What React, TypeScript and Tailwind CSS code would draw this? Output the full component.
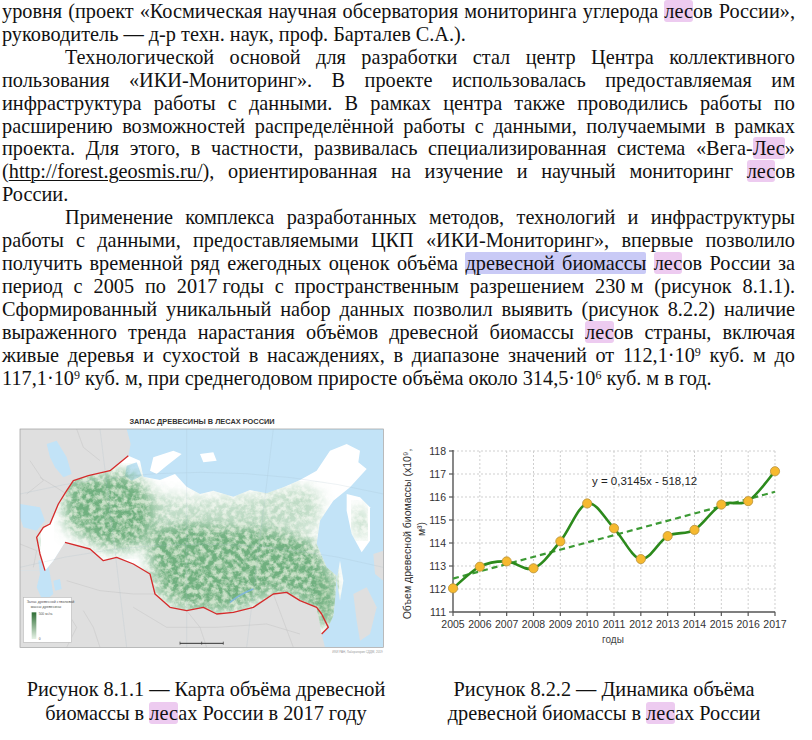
import type { ReactNode } from "react";

// Body text lines are split as in the source page so the line breaks match.
function Line({ children, indent, last }: { children: ReactNode; indent?: boolean; last?: boolean }) {
  return (
    <div
      className={`${indent ? "pl-[63px]" : ""} ${last ? "text-left" : "text-justify [text-align-last:justify]"}`}
    >
      {children}
    </div>
  );
}

function Pink({ children }: { children: ReactNode }) {
  return <span className="rounded-[3px] bg-[#edcbf0]">{children}</span>;
}

function Blue({ children }: { children: ReactNode }) {
  return <span className="rounded-[2px] bg-[#c9caf6]">{children}</span>;
}

function Sup({ children }: { children: ReactNode }) {
  return <sup className="text-[12px]">{children}</sup>;
}

const years = [2005, 2006, 2007, 2008, 2009, 2010, 2011, 2012, 2013, 2014, 2015, 2016, 2017];
const vals = [112.03, 112.97, 113.2, 112.9, 114.07, 115.72, 114.64, 113.3, 114.3, 114.57, 115.67, 115.82, 117.12];

const X0 = 53;
const STEP = 26.833;
const Y111 = 213;
const UNIT = 23;
const px = (i: number) => X0 + i * STEP;
const py = (v: number) => Y111 - (v - 111) * UNIT;

function smoothPath(pts: [number, number][]) {
  let d = `M${pts[0][0]},${pts[0][1]}`;
  for (let i = 0; i < pts.length - 1; i++) {
    const p0 = pts[i - 1] ?? pts[i];
    const p1 = pts[i];
    const p2 = pts[i + 1];
    const p3 = pts[i + 2] ?? p2;
    const c1x = p1[0] + (p2[0] - p0[0]) / 6;
    const c1y = p1[1] + (p2[1] - p0[1]) / 6;
    const c2x = p2[0] - (p3[0] - p1[0]) / 6;
    const c2y = p2[1] - (p3[1] - p1[1]) / 6;
    d += ` C${c1x.toFixed(1)},${c1y.toFixed(1)} ${c2x.toFixed(1)},${c2y.toFixed(1)} ${p2[0].toFixed(1)},${p2[1].toFixed(1)}`;
  }
  return d;
}

function BiomassChart() {
  const pts = vals.map((v, i) => [px(i), py(v)] as [number, number]);
  const trend = (y: number) => 0.3145 * y - 518.12;
  const sans = "Liberation Sans, Arial, sans-serif";
  return (
    <svg width="412" height="262" viewBox="0 0 412 262" className="block">
      {/* grid */}
      {[112, 113, 114, 115, 116, 117, 118].map((v) => (
        <line key={v} x1={X0} x2={px(12)} y1={py(v)} y2={py(v)} stroke="#cfcfcf" strokeWidth="1" strokeDasharray="2 2" />
      ))}
      {years.slice(1).map((y, i) => (
        <line key={y} x1={px(i + 1)} x2={px(i + 1)} y1={py(118)} y2={Y111} stroke="#cfcfcf" strokeWidth="1" strokeDasharray="2 2" />
      ))}
      {/* axes */}
      <line x1={X0} x2={X0} y1={py(118) - 1} y2={Y111} stroke="#555" strokeWidth="1.4" />
      <line x1={X0} x2={px(12)} y1={Y111} y2={Y111} stroke="#555" strokeWidth="1.4" />
      {[111, 112, 113, 114, 115, 116, 117, 118].map((v) => (
        <g key={v}>
          <line x1={X0 - 4} x2={X0} y1={py(v)} y2={py(v)} stroke="#555" strokeWidth="1.2" />
          <text x={X0 - 7} y={py(v) + 4} textAnchor="end" fontFamily={sans} fontSize="10.5" fill="#333">
            {v}
          </text>
        </g>
      ))}
      {years.map((y, i) => (
        <g key={y}>
          <line x1={px(i)} x2={px(i)} y1={Y111} y2={Y111 + 4} stroke="#555" strokeWidth="1.2" />
          <text x={px(i)} y={229} textAnchor="middle" fontFamily={sans} fontSize="10.5" fill="#333">
            {y}
          </text>
        </g>
      ))}
      <text x={213} y={244} textAnchor="middle" fontFamily={sans} fontSize="10" fill="#444">
        годы
      </text>
      <text transform="translate(11,135) rotate(-90)" textAnchor="middle" fontFamily={sans} fontSize="10.5" fill="#333">
        Объем древесной биомассы (x10⁹,
      </text>
      <text transform="translate(25,130) rotate(-90)" textAnchor="middle" fontFamily={sans} fontSize="10.5" fill="#333">
        м³)
      </text>
      {/* trend */}
      <line
        x1={px(0)}
        y1={py(trend(2005))}
        x2={px(12)}
        y2={py(trend(2017))}
        stroke="#3c9a34"
        strokeWidth="2.2"
        strokeDasharray="6 4"
      />
      <path d={smoothPath(pts)} fill="none" stroke="#2c8a1c" strokeWidth="2.6" />
      {pts.map(([x, y], i) => (
        <circle key={i} cx={x} cy={y} r="4.6" fill="#f6b92f" stroke="#b8923c" strokeWidth="0.8" />
      ))}
      <text x={192} y={86} fontFamily={sans} fontSize="11.5" fill="#222">
        y = 0,3145x - 518,12
      </text>
    </svg>
  );
}

const russia =
  "385,185 420,200 430,248 480,258 525,240 560,278 600,300 640,290 700,308 750,288 800,298 850,280 900,258 950,230 990,170 1040,150 1080,170 1075,205 1100,225 1050,280 1000,320 960,380 950,450 980,520 1010,545 1005,620 1000,665 985,700 965,720 950,640 900,620 860,595 820,600 760,640 700,655 650,660 610,640 560,650 510,640 465,600 450,540 400,510 350,490 310,500 270,465 195,445 160,500 135,530 120,480 110,430 130,400 150,390 175,330 200,290 220,260 265,245 330,230 385,185";

const kamchatka = "1040,300 1080,310 1110,340 1110,440 1085,475 1055,420 1040,350";
const sakhalin = "1020,500 1030,560 1020,620 1010,560";

const europe =
  "60,105 380,105 392,150 385,185 330,230 265,245 220,260 200,290 175,330 150,390 130,400 110,430 120,480 135,530 60,530";
const asia =
  "60,530 135,530 160,500 195,445 270,465 310,500 350,490 400,510 450,540 465,600 510,640 560,650 610,640 650,660 700,655 760,640 820,600 860,595 900,620 950,640 965,660 985,700 965,720 975,760 60,760";

function ForestMap() {
  const sans = "Liberation Sans, Arial, sans-serif";
  return (
    <svg width="400" height="262" viewBox="0 0 400 262" className="block">
      <defs>
        <clipPath id="frame">
          <rect x="60" y="105" width="1090" height="655" />
        </clipPath>
        <clipPath id="ru">
          <polygon points={russia} />
          <polygon points={kamchatka} />
          <polygon points={sakhalin} />
        </clipPath>
        <filter id="forest" x="-0.1" y="-0.1" width="1.2" height="1.2">
          <feTurbulence type="fractalNoise" baseFrequency="0.06" numOctaves="4" seed="7" result="n" />
          <feColorMatrix
            in="n"
            type="matrix"
            values="0 0 0 0 0.16  0 0 0 0 0.43  0 0 0 0 0.21  3.0 0 0 0 -0.9"
            result="g"
          />
          <feFlood floodColor="#86b981" floodOpacity="0.45" result="f" />
          <feMerge result="mix">
            <feMergeNode in="f" />
            <feMergeNode in="g" />
          </feMerge>
          <feGaussianBlur in="SourceGraphic" stdDeviation="22" result="m" />
          <feComposite in="mix" in2="m" operator="in" />
        </filter>
        <linearGradient id="leg" x1="0" y1="0" x2="0" y2="1">
          <stop offset="0" stopColor="#2f6e35" />
          <stop offset="1" stopColor="#e6f2e6" />
        </linearGradient>
      </defs>
      <text x="202" y="24.5" textAnchor="middle" fontFamily={sans} fontWeight="bold" fontSize="7.4" fill="#333">
        ЗАПАС ДРЕВЕСИНЫ В ЛЕСАХ РОССИИ
      </text>
      <g transform="translate(0,-5) scale(0.33333)">
        <g clipPath="url(#frame)">
          {/* ocean everywhere, land on top */}
          <rect x="60" y="105" width="1090" height="655" fill="#c2e3f7" />
          <polygon points={europe} fill="#dfdfdf" />
          <polygon points={asia} fill="#dfdfdf" />
          <polygon points="1060,600 1100,580 1130,640 1110,720 1080,740 1070,680" fill="#dfdfdf" />
          <polygon points="1120,480 1150,470 1150,560 1125,540" fill="#dfdfdf" />
          {/* inland seas */}
          <g fill="#c2e3f7">
            <polygon points="140,150 170,140 200,190 215,240 190,250 165,220 150,190" />
            <polygon points="60,330 120,340 135,380 110,410 70,400 60,370" />
            <polygon points="115,500 140,490 150,540 160,600 130,625 110,580 120,540" />
            <polygon points="160,560 180,555 185,585 165,590" />
          </g>
          {/* country borders on the grey land */}
          <g fill="none" stroke="#c6c6c6" strokeWidth="1.6">
            <polyline points="200,560 300,590 400,600 470,600" />
            <polyline points="400,640 500,700 650,700 800,690 900,720" />
            <polyline points="250,650 280,700 300,760" />
            <polyline points="120,250 200,300 190,360 150,400" />
            <polyline points="60,450 110,470 100,520" />
            <polyline points="560,650 600,700 620,760" />
            <polyline points="820,600 850,680 880,760" />
            <polyline points="180,620 230,700 200,760" />
            <polyline points="90,200 130,260 80,300" />
            <polyline points="230,105 250,160 300,200" />
          </g>
          {/* Russia */}
          <polygon points={russia} fill="#ffffff" />
          <polygon points={kamchatka} fill="#ffffff" />
          <polygon points={sakhalin} fill="#ffffff" />
          <polygon points="460,190 520,170 545,180 500,215 470,240 450,230" fill="#ffffff" />
          <polygon points="600,180 640,175 650,200 610,205" fill="#ffffff" />
          <polygon points="380,215 410,205 425,245 395,260 375,245" fill="#c2e3f7" />
          {/* forest cover */}
          <g clipPath="url(#ru)">
            <polygon
              points="200,250 300,240 380,232 440,280 470,360 440,450 360,470 300,460 250,430 200,400 190,320"
              fill="#000"
              filter="url(#forest)"
            />
            <polygon
              points="440,400 560,380 700,390 820,400 930,430 990,520 1000,650 960,700 900,620 820,600 700,655 560,650 470,600 450,520"
              fill="#000"
              filter="url(#forest)"
            />
            <polygon
              points="450,300 600,315 750,305 900,275 960,300 960,400 850,405 700,385 550,375 460,385"
              fill="#000"
              opacity="0.45"
              filter="url(#forest)"
            />
            <polygon points="1060,330 1100,360 1100,430 1070,430" fill="#000" opacity="0.6" filter="url(#forest)" />
            <polygon points="955,540 1010,550 1005,690 970,705" fill="#000" filter="url(#forest)" />
            <polygon points="100,400 120,400 120,460 100,460" fill="#000" filter="url(#forest)" />
          </g>
          {/* graticule */}
          <g fill="none" stroke="#9fb7c6" strokeWidth="1.1" opacity="0.5">
            <path d="M300,105 Q340,430 380,760" />
            <path d="M560,105 Q560,430 560,760" />
            <path d="M820,105 Q780,430 740,760" />
            <path d="M60,300 Q600,170 1150,300" />
            <path d="M60,520 Q600,380 1150,520" />
          </g>
          {/* Lake Baikal */}
          <path d="M690,625 Q720,600 760,585" stroke="#7fb6d8" strokeWidth="5" fill="none" />
          {/* state border */}
          <g fill="none" stroke="#d52b2b" strokeWidth="4" strokeLinejoin="round">
            <polyline points="385,185 330,230 265,245 220,260 200,290 175,330 150,390 130,400 110,430 120,480 135,530" />
            <polyline points="195,445 270,465 310,500 350,490 400,510 450,540 465,600 510,640 560,650 610,640 650,660 700,655 760,640 820,600 860,595 900,620 950,640 965,660 985,700 965,720" />
          </g>
          {/* legend */}
          <rect x="70" y="610" width="145" height="135" fill="#fff" stroke="#bbb" strokeWidth="2" />
          <text x="80" y="628" fontFamily={sans} fontSize="11" fill="#555">
            Запас древесной стволовой
          </text>
          <text x="92" y="642" fontFamily={sans} fontSize="11" fill="#555">
            массы древесины
          </text>
          <rect x="95" y="655" width="14" height="80" fill="url(#leg)" />
          <text x="116" y="664" fontFamily={sans} fontSize="10" fill="#555">
            500 м³/га
          </text>
          <text x="116" y="737" fontFamily={sans} fontSize="10" fill="#555">
            0
          </text>
          {/* scale bar */}
          <line x1="540" y1="748" x2="670" y2="748" stroke="#333" strokeWidth="3" />
          <line x1="540" y1="743" x2="540" y2="752" stroke="#333" strokeWidth="2" />
          <line x1="605" y1="743" x2="605" y2="752" stroke="#333" strokeWidth="2" />
          <line x1="670" y1="743" x2="670" y2="752" stroke="#333" strokeWidth="2" />
        </g>
        <rect x="60" y="105" width="1090" height="655" fill="none" stroke="#999" strokeWidth="2" />
        <text x="1148" y="776" textAnchor="end" fontFamily={sans} fontSize="9" fill="#999">
          ИКИ РАН, Лаборатория СДДМ, 2019
        </text>
      </g>
    </svg>
  );
}

export default function App() {
  return (
    <div className="w-[812px] bg-white font-['Liberation_Serif','Times_New_Roman',serif] text-[20.3px] leading-[22.9px] text-[#111]">
      <div className="w-[795px] pl-[2px]">
        <Line>
          уровня (проект «Космическая научная обсерватория мониторинга углерода <Pink>лес</Pink>ов России»,
        </Line>
        <Line last>руководитель — д-р техн. наук, проф. Барталев С.А.).</Line>
        <Line indent>Технологической основой для разработки стал центр Центра коллективного</Line>
        <Line>пользования «ИКИ-Мониторинг». В проекте использовалась предоставляемая им</Line>
        <Line>инфраструктура работы с данными. В рамках центра также проводились работы по</Line>
        <Line>расширению возможностей распределённой работы с данными, получаемыми в рамках</Line>
        <Line>
          проекта. Для этого, в частности, развивалась специализированная система «Вега-<Pink>Лес</Pink>»
        </Line>
        <Line>
          (<span className="underline decoration-1 underline-offset-2">http://forest.geosmis.ru/</span>), ориентированная на
          изучение и научный мониторинг <Pink>лес</Pink>ов
        </Line>
        <Line last>России.</Line>
        <Line indent>Применение комплекса разработанных методов, технологий и инфраструктуры</Line>
        <Line>работы с данными, предоставляемыми ЦКП «ИКИ-Мониторинг», впервые позволило</Line>
        <Line>
          получить временной ряд ежегодных оценок объёма <Blue>древесной биомассы</Blue> <Pink>лес</Pink>ов России за
        </Line>
        <Line>
          период с 2005 по <span className="inline-block">2017&nbsp;годы</span> с пространственным разрешением{" "}
          <span className="inline-block">230&nbsp;м</span> (рисунок&nbsp;8.1.1).
        </Line>
        <Line>Сформированный уникальный набор данных позволил выявить (рисунок 8.2.2) наличие</Line>
        <Line>
          выраженного тренда нарастания объёмов древесной биомассы <Pink>лес</Pink>ов страны, включая
        </Line>
        <Line>
          живые деревья и сухостой в насаждениях, в диапазоне значений от 112,1·10<Sup>9</Sup> куб. м до
        </Line>
        <Line last>
          117,1·10<Sup>9</Sup> куб. м, при среднегодовом приросте объёма около 314,5·10<Sup>6</Sup> куб. м в год.
        </Line>
      </div>

      <div className="mt-[10px] grid grid-cols-[400px_412px]">
        <figure>
          <ForestMap />
          <figcaption className="mt-4 pl-[12px] text-center leading-[24px]">
            Рисунок 8.1.1 — Карта объёма древесной
            <br />
            биомассы в <Pink>лес</Pink>ах России в 2017 году
          </figcaption>
        </figure>
        <figure>
          <BiomassChart />
          <figcaption className="mt-4 pr-[4px] text-center leading-[24px]">
            Рисунок 8.2.2 — Динамика объёма
            <br />
            древесной биомассы в <Pink>лес</Pink>ах России
          </figcaption>
        </figure>
      </div>
      <div className="h-[16px]" />
    </div>
  );
}
